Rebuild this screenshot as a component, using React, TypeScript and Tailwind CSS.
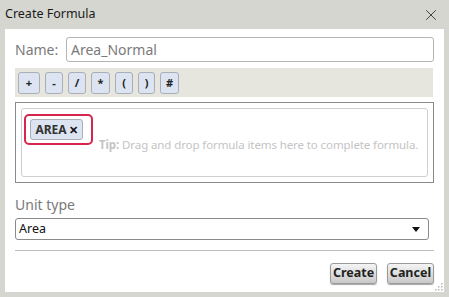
import { X } from 'lucide-react'

const OPS: [string, number][] = [
  ['+', 22],
  ['-', 18],
  ['/', 18],
  ['*', 19],
  ['(', 18],
  [')', 17],
  ['#', 19],
]

function OpButton({ label, width }: { label: string; width: number }) {
  return (
    <button
      className="flex h-[22px] items-center justify-center rounded-[3px] border border-[#a9aeb8] bg-[#dde4f1] text-[11px] font-bold leading-none text-[#222]"
      style={{ width }}
    >
      {label}
    </button>
  )
}

function FooterButton({ label }: { label: string }) {
  return (
    <button className="h-[21px] w-[47px] rounded-[3px] border border-[#9a9a9a] bg-gradient-to-b from-[#f4f4f4] to-[#c9c9c9] text-[12.5px] font-bold leading-none text-[#222] shadow-[0_1px_1px_rgba(0,0,0,0.35)]">
      {label}
    </button>
  )
}

export default function App() {
  return (
    <div
      className="flex h-[297px] w-[449px] flex-col bg-[#d6d6d0]"
      style={{ fontFamily: '"Noto Sans", "Open Sans", sans-serif' }}
    >
      <div className="flex h-[29px] items-center justify-between pl-[5px] pr-[9px]">
        <span className="text-[12.5px] text-[#1a1a1a]">Create Formula</span>
        <X className="h-[18px] w-[18px] text-[#333]" strokeWidth={1.2} />
      </div>

      <div className="relative mx-[5px] mb-[5px] flex flex-1 flex-col bg-white px-[10px] pt-[8px]">
        <div className="flex h-[25px] items-center">
          <span className="w-[51px] text-[14px] text-[#7a7a7a]">Name:</span>
          <div className="flex h-[25px] flex-1 items-center rounded-[3px] border border-[#b4b4b4] px-[4px] text-[14px] text-[#7a7a7a]">
            Area_Normal
          </div>
        </div>

        <div className="mt-[6px] flex h-[29px] w-[418px] items-center gap-[5px] bg-[#e6e6df] px-[3px]">
          {OPS.map(([op, w]) => (
            <OpButton key={op} label={op} width={w} />
          ))}
        </div>

        <div className="mt-[5px] h-[81px] w-[419px] border border-[#8a8a8a] p-[5px]">
          <div className="flex h-full items-start rounded-[3px] border border-[#cfcfcf] pl-[2px] pt-[5px]">
            <div className="rounded-[5px] border-2 border-[#d7264d] py-[3px] pl-[4px] pr-[8px]">
              <div className="flex h-[21px] w-[53px] items-center justify-center gap-[2px] rounded-[3px] border border-[#a9aeb8] bg-[#dde4f1] text-[12px] font-bold text-[#333]">
                AREA
                <span className="text-[11px] font-black leading-none text-[#111]">✕</span>
              </div>
            </div>
            <div className="ml-[6px] mt-[22px] whitespace-nowrap text-[11.5px] tracking-[-0.1px] text-[#c4c4c4]">
              <span className="font-bold">Tip:</span> Drag and drop formula items here to complete formula.
            </div>
          </div>
        </div>

        <div className="mt-[11px] text-[14px] text-[#7a7a7a]">Unit type</div>

        <div className="mt-[3px] flex h-[22px] w-[414px] items-center justify-between rounded-[3px] border border-[#8a8a8a] pl-[3px] pr-[8px] text-[12.5px] text-[#111]">
          <span>Area</span>
          <svg width="8" height="5" viewBox="0 0 8 5">
            <path d="M0 0 L8 0 L4 5 Z" fill="#111" />
          </svg>
        </div>

        <div className="mt-[10px] h-px w-[419px] bg-[#bdbdbd]" />

        <div className="mt-[12px] flex w-[419px] justify-end gap-[10px]">
          <FooterButton label="Create" />
          <FooterButton label="Cancel" />
        </div>

        <svg className="absolute bottom-[1px] right-[1px]" width="10" height="10" viewBox="0 0 10 10">
          {[
            [8, 2], [8, 5], [5, 5], [8, 8], [5, 8], [2, 8],
          ].map(([x, y]) => (
            <rect key={`${x}-${y}`} x={x} y={y} width="1.5" height="1.5" fill="#b8b8b8" />
          ))}
        </svg>
      </div>
    </div>
  )
}
